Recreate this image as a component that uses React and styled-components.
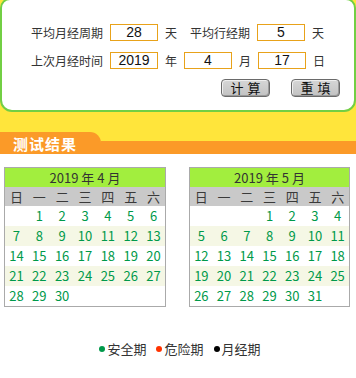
import React from 'react';
import styled, { createGlobalStyle } from 'styled-components';

const GlobalStyle = createGlobalStyle`
  body {
    margin: 0;
    background: #fff;
    font-family: "Noto Sans CJK SC", "Noto Sans", sans-serif;
  }
`;

const Page = styled.div`
  width: 356px;
  height: 378px;
  overflow: hidden;
  background: #fff;
`;

const Top = styled.div`
  background: #ffe53b;
  padding-bottom: 20px;
`;

const FormBox = styled.div`
  box-sizing: border-box;
  height: 114px;
  margin-top: -2px;
  width: 356px;
  background: #fff;
  border: 2px solid #72cf44;
  border-radius: 10px 10px 12px 12px;
  padding: 24px 14px 0 29px;
`;

const Row = styled.div`
  display: flex;
  align-items: center;
  gap: 7px;
  height: 17px;
  margin-bottom: 11px;
  font-size: 12px;
  color: #333;
`;

const Label = styled.span`
  width: ${(p) => p.$w}px;
  margin-left: ${(p) => p.$ml || 0}px;
  white-space: nowrap;
  line-height: 17px;
`;

const Unit = styled.span`
  width: 12px;
  line-height: 17px;
`;

const Input = styled.div`
  box-sizing: border-box;
  width: 48px;
  height: 17px;
  border: 1px solid #e8a21a;
  text-align: center;
  font-family: "Liberation Sans", Arial, sans-serif;
  font-size: 14px;
  line-height: 15px;
  color: #111;
`;

const Buttons = styled.div`
  display: flex;
  justify-content: flex-end;
  gap: 21px;
  margin-top: -1px;
`;

const Button = styled.div`
  box-sizing: border-box;
  width: 49px;
  height: 18px;
  border: 1px solid #6a6a6a;
  border-radius: 4px;
  background: linear-gradient(#d6d6d6, #c2c2c2);
  box-shadow: inset -1px -1px 0 #9a9a9a, inset 1px 1px 0 #eee;
  text-align: center;
  font-size: 13px;
  line-height: 16px;
  letter-spacing: 4px;
  text-indent: 4px;
  color: #111;
`;

const Banner = styled.div`
  display: flex;
  align-items: flex-end;
  height: 22px;
  background: #ffe53b;
`;

const Tab = styled.div`
  width: 101px;
  height: 22px;
  background: #fb9a28;
  border-top-right-radius: 11px;
  box-sizing: border-box;
  padding-left: 13px;
  color: #fff;
  font-weight: 700;
  font-size: 15px;
  letter-spacing: 1px;
  line-height: 23px;
`;

const Bar = styled.div`
  flex: 1;
  height: 13px;
  background: #fb9a28;
`;

const Calendars = styled.div`
  display: flex;
  gap: 23px;
  padding: 13px 0 0 4px;
`;

const Calendar = styled.div`
  width: ${(p) => p.$w}px;
  border: 1px solid #aaa;
  font-size: 13px;
`;

const MonthHead = styled.div`
  height: 19px;
  line-height: 19px;
  background: #a2ee3e;
  text-align: center;
  color: #333;
`;

const Grid = styled.div`
  display: grid;
  grid-template-columns: repeat(7, 1fr);
  background: ${(p) => p.$bg || 'transparent'};
`;

const WeekCell = styled.div`
  height: 19px;
  line-height: 19px;
  text-align: center;
  color: #3a3a3a;
  background: #c9c9c9;
`;

const Day = styled.div`
  height: 20px;
  line-height: 20px;
  text-align: center;
  color: #00994a;
`;

const Legend = styled.div`
  display: flex;
  justify-content: center;
  gap: 10px;
  margin-top: 32px;
  padding-left: 4px;
  font-size: 13px;
  color: #333;
`;

const Item = styled.span`
  display: flex;
  align-items: center;
  gap: 2px;
`;

const Dot = styled.span`
  width: 6px;
  height: 6px;
  border-radius: 50%;
  background: ${(p) => p.$c};
`;

const weekdays = ['日', '一', '二', '三', '四', '五', '六'];

const buildWeeks = (offset, days) => {
  const cells = [];
  for (let i = 0; i < offset; i++) cells.push('');
  for (let d = 1; d <= days; d++) cells.push(d);
  while (cells.length < 35) cells.push('');
  const weeks = [];
  for (let i = 0; i < cells.length; i += 7) weeks.push(cells.slice(i, i + 7));
  return weeks;
};

const MonthCal = ({ month, offset, days, w }) => (
  <Calendar $w={w}>
    <MonthHead>2019 年 {month} 月</MonthHead>
    <Grid>
      {weekdays.map((d) => (
        <WeekCell key={d}>{d}</WeekCell>
      ))}
    </Grid>
    {buildWeeks(offset, days).map((week, i) => (
      <Grid key={i} $bg={i % 2 === 1 ? '#f5f7e5' : '#fff'}>
        {week.map((d, j) => (
          <Day key={j}>{d}</Day>
        ))}
      </Grid>
    ))}
  </Calendar>
);

const App = () => (
  <Page>
    <GlobalStyle />
    <Top>
      <FormBox>
        <Row>
          <Label $w={72}>平均月经周期</Label>
          <Input>28</Input>
          <Unit>天</Unit>
          <Label $w={60} $ml={6}>平均行经期</Label>
          <Input>5</Input>
          <Unit>天</Unit>
        </Row>
        <Row>
          <Label $w={72}>上次月经时间</Label>
          <Input>2019</Input>
          <Unit>年</Unit>
          <Input>4</Input>
          <Unit>月</Unit>
          <Input>17</Input>
          <Unit>日</Unit>
        </Row>
        <Buttons>
          <Button>计算</Button>
          <Button>重填</Button>
        </Buttons>
      </FormBox>
    </Top>
    <Banner>
      <Tab>测试结果</Tab>
      <Bar />
    </Banner>
    <Calendars>
      <MonthCal month={4} offset={1} days={30} w={160} />
      <MonthCal month={5} offset={3} days={31} w={159} />
    </Calendars>
    <Legend>
      <Item>
        <Dot $c="#00994a" />
        安全期
      </Item>
      <Item>
        <Dot $c="#ff3300" />
        危险期
      </Item>
      <Item>
        <Dot $c="#000" />
        月经期
      </Item>
    </Legend>
  </Page>
);

export default App;
